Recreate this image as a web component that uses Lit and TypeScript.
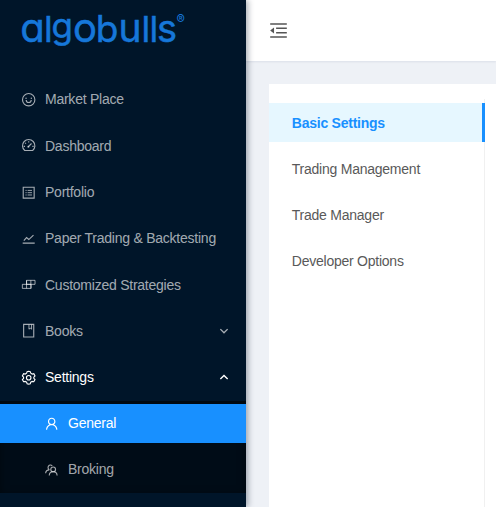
import { LitElement, html, svg, css } from "lit";
import { customElement } from "lit/decorators.js";
import { classMap } from "lit/directives/class-map.js";

const icons: Record<string, unknown> = {
  smile: svg`<g class="line"><circle cx="512" cy="512" r="412"/><path d="M344 533a168 168 0 0 0 336 0"/></g><circle cx="336" cy="421" r="48"/><circle cx="688" cy="421" r="48"/>`,
  dashboard: svg`<g class="line"><path d="M249 832A412 412 0 1 1 775 832Z"/><path d="M512 220v80M276 319l54 54M182 555h86M756 555h86M490 580L700 366"/></g><circle cx="490" cy="580" r="68"/>`,
  profile: svg`<path class="line" d="M148 148h728v728H148z"/><path class="line thin" d="M300 360h75M300 512h75M300 664h75M440 360h290M440 512h290M440 664h290"/>`,
  chart: svg`<path class="line" d="M112 804h800M190 640L370 440L520 568L830 270"/>`,
  blocks: svg`<path class="line thin" d="M90 488h580v270H90zM370 222h564v266H370zM370 222v536M656 222v536"/>`,
  book: svg`<path class="line" d="M176 90h672v844H176z"/><path class="line thin" d="M530 110v300l86-66l86 66V110"/>`,
  setting: svg`<path class="line" d="M512 88l104 24l36 104l92 54l108-22l80 142l-78 84v78l78 84l-80 142l-108-22l-92 54l-36 104l-104 24l-104-24l-36-104l-92-54l-108 22l-80-142l78-84v-78l-78-84l80-142l108 22l92-54l36-104z"/><circle class="line" cx="512" cy="512" r="150"/>`,
  user: svg`<path d="M858.5 763.6a374 374 0 0 0-80.6-119.5 375.63 375.63 0 0 0-119.5-80.6c-.4-.2-.8-.3-1.2-.5C719.5 518 760 444.7 760 362c0-137-111-248-248-248S264 225 264 362c0 82.7 40.5 156 102.8 201.1-.4.2-.8.3-1.2.5-44.8 18.9-85 46-119.5 80.6a375.63 375.63 0 0 0-80.6 119.5A371.7 371.7 0 0 0 136 901.8a8 8 0 0 0 8 8.2h60c4.4 0 7.9-3.5 8-7.8 2-77.2 33-149.5 87.8-204.3 56.7-56.7 132-87.9 212.2-87.9s155.5 31.2 212.2 87.9C779 752.7 810 825 812 902.2c.1 4.4 3.6 7.8 8 7.8h60a8 8 0 0 0 8-8.2c-1-47.8-10.9-94.3-29.5-138.2zM512 534c-45.9 0-89.1-17.9-121.6-50.4S340 407.9 340 362c0-45.9 17.9-89.1 50.4-121.6S466.1 190 512 190s89.1 17.9 121.6 50.4S684 316.1 684 362c0 45.9-17.9 89.1-50.4 121.6S557.9 534 512 534z"/>`,
  team: svg`<g class="line"><circle cx="610" cy="492" r="158"/><path d="M348 894c8-150 120-244 262-244s254 94 262 244"/><path d="M548 254a162 162 0 1 0-186 258M106 748c12-128 94-218 246-226"/></g>`,
  down: svg`<path class="line heavy" d="M140 320l372 372l372-372"/>`,
  up: svg`<path class="line heavy" d="M140 720l372-372l372 372"/>`,
  fold: svg`<path d="M64 120h896v84H64zM384 348h576v84H384zM384 592h576v84H384zM64 820h896v84H64zM78 498L254 360q18-12 18 8v288q0 20-18 8L78 526q-18-14 0-28z"/>`,
};

const icon = (name: string, cls = "icon") =>
  html`<svg class=${cls} viewBox="0 0 1024 1024">${icons[name]}</svg>`;

interface Entry {
  label: string;
  icon: string;
  arrow?: "up" | "down";
  open?: boolean;
  active?: boolean;
}

const mainMenu: Entry[] = [
  { label: "Market Place", icon: "smile" },
  { label: "Dashboard", icon: "dashboard" },
  { label: "Portfolio", icon: "profile" },
  { label: "Paper Trading & Backtesting", icon: "chart" },
  { label: "Customized Strategies", icon: "blocks" },
  { label: "Books", icon: "book", arrow: "down" },
  { label: "Settings", icon: "setting", arrow: "up", open: true },
];

const subMenu: Entry[] = [
  { label: "General", icon: "user", active: true },
  { label: "Broking", icon: "team" },
];

const tabs = ["Basic Settings", "Trading Management", "Trade Manager", "Developer Options"];

@customElement("app-root")
export class AppRoot extends LitElement {
  static styles = css`
    :host {
      display: flex;
      height: 507px;
      overflow: hidden;
      background: #eef1f6;
      font: 14px/39px "Liberation Sans", Arial, sans-serif;
      letter-spacing: -0.24px;
    }
    .sider {
      flex: none;
      box-sizing: border-box;
      width: 245.8px;
      background: #001529;
      box-shadow: 2px 0 6px rgba(0, 21, 41, 0.35);
      z-index: 1;
    }
    .logo {
      display: block;
      width: 200px;
      height: 60px;
      fill: #1677d9;
      stroke: #1677d9;
      stroke-width: 0.5px;
      font-family: Inter, sans-serif;
      letter-spacing: 0;
      font-feature-settings: "cv11" 1;
    }
    .menu {
      padding-top: 16.6px;
    }
    .item {
      display: flex;
      align-items: center;
      height: 38.57px;
      margin: 3.86px 0 7.71px;
      padding: 0 17px 0 21.3px;
      color: rgba(255, 255, 255, 0.65);
    }
    .item + .item {
      margin-top: 0;
    }
    .item.open {
      margin-bottom: 3.9px;
      color: #fff;
    }
    .label {
      flex: 1;
      margin-left: 8.3px;
      padding-top: 0.4px;
      white-space: nowrap;
    }
    svg {
      flex: none;
      fill: currentColor;
    }
    .icon {
      width: 15.4px;
      height: 15.4px;
    }
    .arrow {
      width: 10px;
      height: 10px;
    }
    .line {
      fill: none;
      stroke: currentColor;
      stroke-width: 74;
    }
    .thin {
      stroke-width: 62;
    }
    .heavy {
      stroke-width: 140;
    }
    .sub {
      padding: 3.6px 0 3.9px;
      background: #000c17;
      box-shadow: inset 0 2px 8px rgba(0, 0, 0, 0.45);
    }
    .sub .item {
      margin-top: 0;
      padding-left: 44.3px;
    }
    .sub .item:last-child {
      margin-bottom: 0;
    }
    .item.active {
      background: #1890ff;
      color: #fff;
    }
    .main {
      flex: 1;
      min-width: 0;
      display: flex;
      flex-direction: column;
    }
    .header {
      flex: none;
      display: flex;
      align-items: center;
      box-sizing: border-box;
      height: 61px;
      padding-left: 23px;
      background: #fff;
      box-shadow: 0 1px 2px rgba(0, 21, 80, 0.08);
      color: #555;
    }
    .fold {
      width: 19px;
      height: 19px;
    }
    .panel {
      flex: 1;
      box-sizing: border-box;
      margin: 23px 0 0 23px;
      padding-top: 15.4px;
      background: #fff;
    }
    .tabs {
      box-sizing: border-box;
      width: 216px;
      height: 100%;
      padding-top: 3.9px;
      border-right: 1px solid #f0f0f0;
    }
    .tab {
      box-sizing: border-box;
      height: 38.57px;
      margin: 0 -1px 7.71px 0;
      padding: 0.3px 0 0 23px;
      color: #595959;
    }
    .tab.selected {
      background: #e6f7ff;
      border-right: 3px solid #1890ff;
      color: #1890ff;
      font-weight: 700;
    }
  `;

  private item(e: Entry) {
    return html`<div class=${classMap({ item: true, open: !!e.open, active: !!e.active })}>
      ${icon(e.icon)}<span class="label">${e.label}</span>${e.arrow ? icon(e.arrow, "arrow") : ""}
    </div>`;
  }

  render() {
    return html`
      <div class="sider">
        <svg class="logo" viewBox="0 0 200 60">
          <text y="41.7" font-size="40"><tspan x="20.3">a</tspan><tspan x="44" font-size="36">l</tspan><tspan x="51.4" y="37.8" font-size="35">g</tspan><tspan x="73" y="41.7">o</tspan><tspan x="95.8" font-size="37">b</tspan><tspan x="118.5" font-size="39">u</tspan><tspan x="141.6" font-size="36">l</tspan><tspan x="149.4" font-size="36">l</tspan><tspan x="156.9" font-size="38">s</tspan></text>
          <text x="176.5" y="23.8" font-size="12.5" stroke="none">®</text>
        </svg>
        <div class="menu">${mainMenu.map((e) => this.item(e))}</div>
        <div class="sub">${subMenu.map((e) => this.item(e))}</div>
      </div>
      <div class="main">
        <div class="header">${icon("fold", "fold")}</div>
        <div class="panel">
          <div class="tabs">
            ${tabs.map((t, i) => html`<div class=${classMap({ tab: true, selected: i === 0 })}>${t}</div>`)}
          </div>
        </div>
      </div>
    `;
  }
}
